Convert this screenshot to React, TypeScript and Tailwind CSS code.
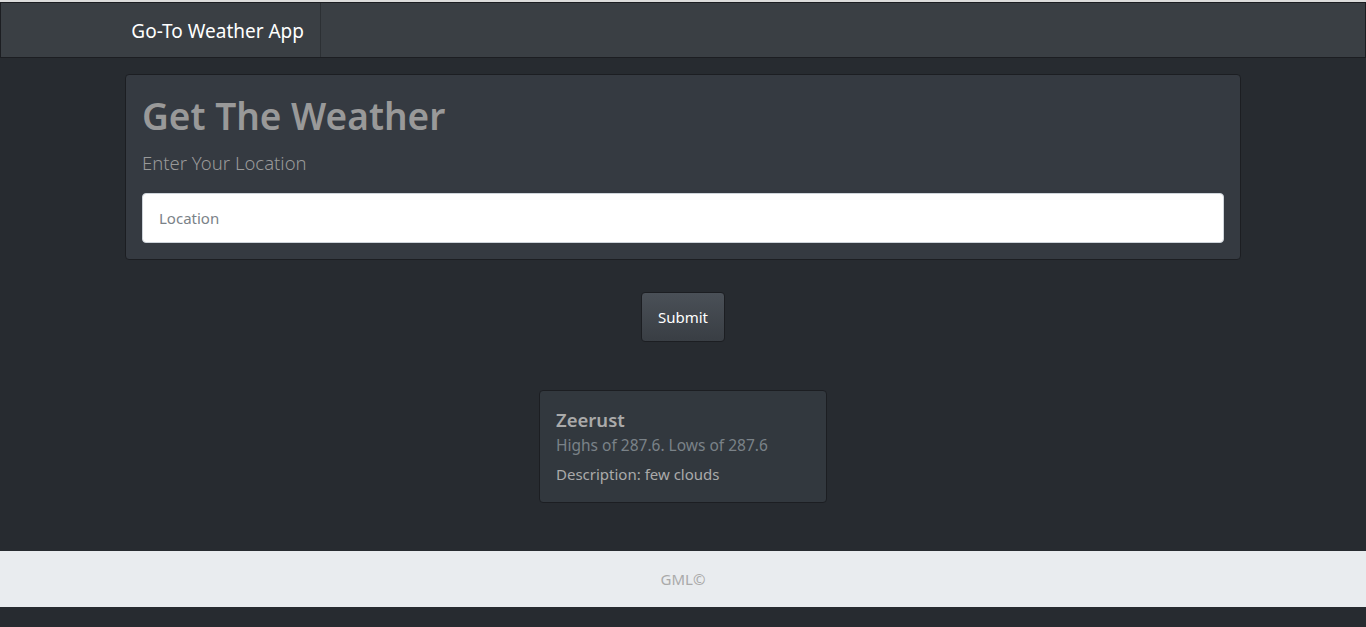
import React from 'react';

export default function App() {
  return (
    <div
      className="min-h-[627px] bg-[#272b30] text-[#aaaaaa]"
      style={{ fontFamily: '"Noto Sans", "Open Sans", sans-serif' }}
    >
      <div className="h-[2px] bg-[#dcdcdc]" />
      <nav className="flex h-[56px] border border-[#1c1e22] bg-[#3a3f44]">
        <div className="flex w-[320px] items-center justify-end border-r border-[#2c3034] pr-[16px]">
          <span className="mt-[2px] text-[19px] text-white">Go-To Weather App</span>
        </div>
      </nav>

      <main className="flex flex-col items-center pt-[16px]">
        <section className="w-[1116px] rounded-[4px] border border-[#1c1e22] bg-[#353a41] px-[16px] pb-[16px] pt-[18px]">
          <h1 className="text-[37px] font-semibold leading-[46px] text-[#999999]">Get The Weather</h1>
          <p className="mt-[11px] text-[18.5px] font-light leading-[26px] text-[#999999]">Enter Your Location</p>
          <input
            type="text"
            placeholder="Location"
            className="mt-[17px] h-[50px] w-full rounded-[4px] border border-[#ced4da] bg-white px-[16px] text-[15px] text-[#272b30] placeholder:text-[#7a8288] outline-none"
          />
        </section>

        <button className="mt-[32px] h-[50px] w-[84px] rounded-[4px] border border-[#1c1e22] bg-gradient-to-b from-[#4a5057] to-[#393e44] text-[15px] text-white">
          Submit
        </button>

        <div className="mt-[48px] h-[113px] w-[288px] rounded-[4px] border border-[#1c1e22] bg-[#32383e] px-[16px] pt-[16px]">
          <h2 className="text-[18.5px] font-semibold leading-[26px] text-[#aaaaaa]">Zeerust</h2>
          <p className="text-[15.5px] leading-[24px] text-[#7a8288]">Highs of 287.6. Lows of 287.6</p>
          <p className="mt-[5px] text-[15px] leading-[24px] text-[#aaaaaa]">Description: few clouds</p>
        </div>
      </main>

      <footer className="mt-[48px] flex h-[56px] items-center justify-center bg-[#e9ecef]">
        <span className="text-[15px] text-[#aaaaaa]">GML©</span>
      </footer>
    </div>
  );
}
